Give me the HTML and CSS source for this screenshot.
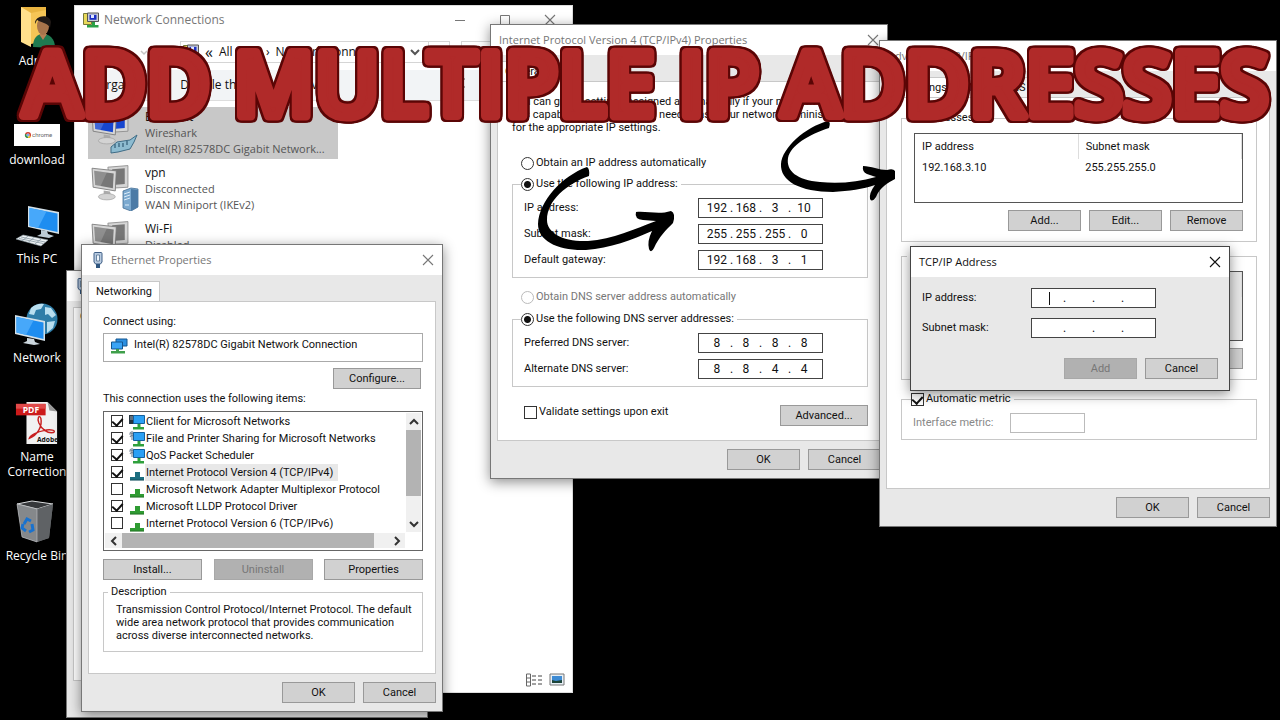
FILE: index.html
```
<!DOCTYPE html>
<html lang="en">
<head>
    <meta charset="utf-8">
    <title>Add Multiple IP Addresses</title>
    <link rel="stylesheet" href="styles.css">
</head>
<body>
    <!-- Shared icons -->
    <svg class="sprite" width="0" height="0" aria-hidden="true">
        <symbol id="i-close" viewBox="0 0 12 12"><path d="M1 1l10 10M11 1L1 11" fill="none" stroke="currentColor" stroke-width="1.1"/></symbol>
        <symbol id="i-net" viewBox="0 0 16 16">
            <path d="M.5 1.500h8v11h-8z" fill="#e8d95a" stroke="#777a3a"/>
            <path d="M4.500 1h11v8.500h-11z" fill="#c9ccd6" stroke="#555"/>
            <path d="M6.500 2.800h7v5h-7z" fill="#1b2fc4"/><path d="M8 3h3v3H8z" fill="#dfe6ff"/>
            <path d="M9 10h3v3h3.500v2.500H4V13h5z" fill="#2ba046"/>
        </symbol>
        <symbol id="i-plug" viewBox="0 0 10 16">
            <path d="M1 1.500Q1 .5 2 .5h6q1 0 1 1V10L7.500 12h-5L1 10z" fill="#b9cbe0" stroke="#3f5f86"/>
            <path d="M3.500 3h3v6h-3z" fill="#eef5fc" stroke="#52708f" stroke-width=".8"/>
            <path d="M3 12h4v4H3z" fill="#2f567f"/>
        </symbol>
        <symbol id="i-adapter" viewBox="0 0 18 16">
            <path d="M6 1h11v7H6z" fill="#2c8fe0" stroke="#14568f"/>
            <path d="M1.500 4h11v7h-11z" fill="#3aa4f5" stroke="#14568f"/>
            <path d="M6 11h3v2h6v2.500H1V13h5z" fill="#3f9f4a"/>
        </symbol>
        <symbol id="i-client" viewBox="0 0 16 16">
            <path d="M0 1h5v9H0z" fill="#26333d"/><path d="M1 3h3M1 5h3" stroke="#9ab"/>
            <path d="M4.500 1.500h11v8h-11z" fill="#2ba0f4" stroke="#14609e"/>
            <path d="M8.500 10h3v3H15v2.500H4V13h4.500z" fill="#2fa03c"/>
        </symbol>
        <symbol id="i-service" viewBox="0 0 16 16">
            <path d="M3 0v9M0 3h6M1 1l4 5M5 1L1 6" stroke="#7c8a99" stroke-width="1.200"/>
            <path d="M4.500 1.500h11v8h-11z" fill="#2ba0f4" stroke="#14609e"/>
            <path d="M8.500 10h3v3H15v2.500H4V13h4.500z" fill="#2fa03c"/>
        </symbol>
        <symbol id="i-proto" viewBox="0 0 16 16"><path d="M6 7h5v5h4v3.500H1V12h5z" fill="currentColor"/><path d="M1 15h14" stroke="#0004"/></symbol>
        <symbol id="i-screens" viewBox="0 0 36 34">
            <path d="M16 2l19-1.500V21l-17 1z" fill="var(--frame)" stroke="#8a8a8a" stroke-width=".8"/>
            <path d="M20 4l12-1v15l-11 1z" fill="var(--screen)"/>
            <path d="M1 3l23 2.500-1 19L2 21z" fill="var(--frame)" stroke="#777" stroke-width=".8"/>
            <path d="M3 5.500L21.500 8l-.8 14L4 19z" fill="var(--screen)"/>
            <path d="M3 5.500L15 7 9 20l-5-1z" fill="#fff" opacity=".18"/>
            <path d="M12 24l6 1 1 4h-7z" fill="#aaa"/>
            <ellipse cx="15" cy="30" rx="8" ry="3" fill="#d3d3d3" stroke="#999" stroke-width=".6"/>
        </symbol>
    </svg>

    <main class="desktop">
        <nav class="shortcuts">
            <a href="#" class="shortcut">
                <svg viewBox="0 0 40 44">
                    <path d="M4 2h25v34H4z" fill="#e9b440"/><path d="M4 2l10 6v34L4 37z" fill="#ffe08c"/><path d="M14 8L29 5v31l-15 3z" fill="#f6c556"/>
                    <path d="M16 42c0-9 4-13 10-13s12 4 12 14z" fill="#1f7a50"/><path d="M22 29l4 6 4-6z" fill="#b78054"/>
                    <ellipse cx="26" cy="21" rx="6" ry="9" fill="#a8744b"/><path d="M18 19c-1-9 15-11 16-2l-1 6c-2-5-8-5-13-8z" fill="#211a17"/>
                </svg>
                <span>Admin</span>
            </a>
            <a href="#" class="shortcut">
                <svg viewBox="0 0 46 44">
                    <path d="M0 20h46v22H0z" fill="#fff"/>
                    <circle cx="14" cy="31" r="3" fill="#d43b2d"/><path d="M14 31l3 1.500A3 3 0 0 1 14 34z" fill="#efbf2f"/><path d="M14 31l-3-1a3 3 0 0 0 3 4z" fill="#2b9950"/><circle cx="14" cy="31" r="1.300" fill="#4a84e8" stroke="#fff" stroke-width=".5"/>
                    <text x="18" y="33" font-size="6" font-family="Roboto, sans-serif" fill="#666">chrome</text>
                </svg>
                <span>download</span>
            </a>
            <a href="#" class="shortcut">
                <svg viewBox="0 0 46 44">
                    <path d="M14 3l31 6v22l-31-7z" fill="#d3e0e8"/><path d="M15.500 5L43.500 10.500v18.500l-28-6z" fill="#1e8df0"/><path d="M15.500 5l17 3.500L24 25l-8.500-2z" fill="#47a8fa"/>
                    <path d="M27 27l6 1 1 3 6 2-5 2-12-2 4-2z" fill="#bccbd4"/>
                    <path d="M9 32l25 5-7 6L2 36z" fill="#eef2f4" stroke="#93a2ab" stroke-width=".6"/><path d="M7 34l24 5M5 35.500l24 5M14 33l-6 5M20 34.500l-6 5M27 36l-6 5" stroke="#8797a1" stroke-width=".8"/>
                </svg>
                <span>This PC</span>
            </a>
            <a href="#" class="shortcut">
                <svg viewBox="0 0 46 44">
                    <circle cx="28" cy="17" r="15.500" fill="#2e7da8"/>
                    <path d="M17 6q6-5 13-4l-3 5-5 1-2 5-5-1zM31 5l6 1 5 7-4 3-4-4-3 1zM33 20l8-1-2 7-6 5z" fill="#b9dff0"/>
                    <path d="M1 13l30 6v20L1 32z" fill="#d3e0e8"/><path d="M2.500 15L29.500 20.500V37l-27-6.500z" fill="#1e8df0"/><path d="M2.500 15l17 3.500L12 33l-9.500-2.500z" fill="#47a8fa"/>
                    <path d="M13 36l7 1 1 3 5 2-6 1-11-2 4-2z" fill="#cbd6dd"/>
                </svg>
                <span>Network</span>
            </a>
            <a href="#" class="shortcut">
                <svg viewBox="0 0 46 46">
                    <path d="M12 1h22l10 10v34H12z" fill="#f1f1f1"/><path d="M34 1l10 10-8-1z" fill="#999"/>
                    <path d="M15 39c8-3 14-12 12-21-2-4-4 0-2 5 3 7 9 11 15 10 4-2-3-4-10-2-6 1-14 5-15 8z" fill="none" stroke="#c81f1f" stroke-width="1.500"/>
                    <path d="M1 3h31v12H1z" fill="#cc1a1a"/><path d="M1 3h31v5H1z" fill="#e14a4a"/>
                    <text x="8" y="13" font-size="9" font-weight="700" font-family="Open Sans, sans-serif" fill="#fff">PDF</text>
                    <text x="23" y="43" font-size="7" font-weight="700" font-family="Open Sans, sans-serif" fill="#111">Adobe</text>
                </svg>
                <span>Name Correction</span>
            </a>
            <a href="#" class="shortcut">
                <svg viewBox="0 0 46 44">
                    <path d="M3 4l15-3 21 3-4 34-12 4-15-5z" fill="#75787b"/><path d="M3 4l15-3 21 3-16 5z" fill="#35373a" stroke="#d5d7d9"/>
                    <path d="M23 9l16-5-4 34-12 4z" fill="#5f6265"/><path d="M3 4l20 5v33L8 37z" fill="#85888b" stroke="#c3c5c7" stroke-width=".6"/>
                    <path d="M10 24l3-5 4 2M18 24l1 6-4 2M12 31l-4-3 1-4" fill="none" stroke="#1972cf" stroke-width="3"/>
                </svg>
                <span>Recycle Bin</span>
            </a>
        </nav>

        <!-- Explorer window -->
        <section class="window explorer inactive">
            <header class="titlebar">
                <svg class="icon-16"><use href="#i-net"/></svg>
                <h2>Network Connections</h2>
                <div class="window-buttons">
                    <button aria-label="Minimize"><svg viewBox="0 0 12 12"><path d="M1 6.500h10" stroke="currentColor"/></svg></button>
                    <button aria-label="Maximize"><svg viewBox="0 0 12 12"><path d="M1.500 1.500h9v9h-9z" fill="none" stroke="currentColor"/></svg></button>
                    <button aria-label="Close"><svg><use href="#i-close"/></svg></button>
                </div>
            </header>
            <div class="nav-row">
                <button aria-label="Back"><svg viewBox="0 0 14 12"><path d="M13 6H2M6 2L2 6l4 4" fill="none" stroke="#c4c4c4" stroke-width="1.500"/></svg></button>
                <button aria-label="Forward"><svg viewBox="0 0 14 12"><path d="M1 6h11M8 2l4 4-4 4" fill="none" stroke="#c4c4c4" stroke-width="1.500"/></svg></button>
                <button aria-label="Recent"><svg viewBox="0 0 14 12"><path d="M4 5l3 3 3-3" fill="none" stroke="#c4c4c4" stroke-width="1.500"/></svg></button>
                <button aria-label="Up"><svg viewBox="0 0 14 12"><path d="M7 12V2M2 7l5-5 5 5" fill="none" stroke="#555" stroke-width="2"/></svg></button>
                <div class="address">
                    <svg class="icon-16"><use href="#i-net"/></svg>
                    <span class="chevrons">«</span><span>All Co...</span><span>›</span><span class="crumb">Network Connec...</span>
                    <button aria-label="Previous locations"><svg viewBox="0 0 14 12"><path d="M3 4l4 4 4-4" fill="none" stroke="#555" stroke-width="2"/></svg></button>
                    <button class="refresh" aria-label="Refresh"><svg viewBox="0 0 14 12"><path d="M4 2a4.500 4.500 0 1 0 6 0M10 6V2h4M3 2h3" fill="none" stroke="#555" stroke-width="1.500"/></svg></button>
                </div>
                <input class="search" type="search" placeholder="Search Network Connections" aria-label="Search Network Connections">
            </div>
            <div class="toolbar">
                <button>Organize ▾</button>
                <button>Disable this network device</button>
                <button class="view" aria-label="Change your view">
                    <svg viewBox="0 0 16 16"><path d="M.5.5h8v6h-8zM.5 8.500h8v6h-8z" fill="#dceafa" stroke="#777"/><path d="M2 2h5v3H2z" fill="#4a86d8"/><path d="M2 11h5v2H2z" fill="#6ba43a"/><path d="M10 2h5M10 5h3M10 10h5M10 13h3" stroke="#555"/></svg>
                </button>
            </div>
            <ul class="connections">
                <li class="selected">
                    <svg class="screens on" viewBox="0 0 48 46">
                        <use href="#i-screens" width="38" height="36"/>
                        <path d="M20 38l6-5 13-2 7-5-3 7-4 7-12 3-7 1z" fill="#8dbbd0" stroke="#3f6c86"/><path d="M24 39v-4M28 38v-4M32 38v-4M36 36v-4" stroke="#315a75" stroke-width="1.200"/>
                    </svg>
                    <p><b>Ethernet</b><br>Wireshark<br>Intel(R) 82578DC Gigabit Network...</p>
                </li>
                <li>
                    <svg class="screens" viewBox="0 0 48 46">
                        <use href="#i-screens" width="38" height="36"/>
                        <path d="M32 26l8-3 7 1v18l-7 4-8-3z" fill="#7ba9cf" stroke="#456f94" stroke-width=".8"/><path d="M40 24l7 1v17l-7 4z" fill="#4c7ba6"/><path d="M33 29l6-2M33 32l6-2M33 35l6-2M34 40h4" stroke="#dcecf9"/>
                    </svg>
                    <p><b>vpn</b><br>Disconnected<br>WAN Miniport (IKEv2)</p>
                </li>
                <li>
                    <svg class="screens" viewBox="0 0 48 46"><use href="#i-screens" width="38" height="36"/></svg>
                    <p><b>Wi-Fi</b><br>Disabled</p>
                </li>
            </ul>
            <footer class="statusbar">
                <button aria-label="Details"><svg viewBox="0 0 16 14"><path d="M.5 1h4v12h-4zM.5 5h4M.5 9h4" fill="none" stroke="#666"/><path d="M6 3h4M12 3h4M6 7h4M12 7h4M6 11h4M12 11h4" stroke="#444"/></svg></button>
                <button aria-label="Large icons"><svg viewBox="0 0 16 14"><path d="M1 1h14v11H1z" fill="#e8f0f7" stroke="#777"/><path d="M3 3h10v7H3z" fill="#3d8bd4"/><path d="M3 7l4 1 6-1v3H3z" fill="#1c4438"/></svg></button>
            </footer>
        </section>

        <section class="window status inactive">
            <header class="titlebar"><svg class="icon-plug"><use href="#i-plug"/></svg></header>
            <div class="dialog-body"><div class="panel">General</div></div>
        </section>

        <!-- Ethernet Properties -->
        <section class="window ethernet inactive">
            <header class="titlebar">
                <svg class="icon-plug"><use href="#i-plug"/></svg>
                <h2>Ethernet Properties</h2>
                <div class="window-buttons"><button aria-label="Close"><svg><use href="#i-close"/></svg></button></div>
            </header>
            <div class="dialog-body">
                <div class="tabs"><button class="tab">Networking</button></div>
                <div class="panel">
                    <p>Connect using:</p>
                    <div class="adapter"><svg><use href="#i-adapter"/></svg>Intel(R) 82578DC Gigabit Network Connection</div>
                    <div class="button-row configure"><button class="btn wide">Configure...</button></div>
                    <p class="items-label">This connection uses the following items:</p>
                    <div class="listbox">
                        <div class="items">
                            <label><input type="checkbox" checked><svg><use href="#i-client"/></svg><span>Client for Microsoft Networks</span></label>
                            <label><input type="checkbox" checked><svg><use href="#i-service"/></svg><span>File and Printer Sharing for Microsoft Networks</span></label>
                            <label><input type="checkbox" checked><svg><use href="#i-service"/></svg><span>QoS Packet Scheduler</span></label>
                            <label class="current"><input type="checkbox" checked><svg><use href="#i-proto"/></svg><span>Internet Protocol Version 4 (TCP/IPv4)</span></label>
                            <label><input type="checkbox"><svg><use href="#i-proto"/></svg><span>Microsoft Network Adapter Multiplexor Protocol</span></label>
                            <label><input type="checkbox" checked><svg><use href="#i-proto"/></svg><span>Microsoft LLDP Protocol Driver</span></label>
                            <label><input type="checkbox"><svg><use href="#i-proto"/></svg><span>Internet Protocol Version 6 (TCP/IPv6)</span></label>
                        </div>
                        <div class="scroll vertical">
                            <button aria-label="Scroll up"><svg viewBox="0 0 10 10"><path d="M1 7l4-4 4 4" /></svg></button>
                            <div class="thumb"></div>
                            <button aria-label="Scroll down"><svg viewBox="0 0 10 10"><path d="M1 3l4 4 4-4" /></svg></button>
                        </div>
                        <div class="scroll horizontal">
                            <button aria-label="Scroll left"><svg viewBox="0 0 10 10"><path d="M7 1L3 5l4 4" /></svg></button>
                            <div class="thumb"></div>
                            <button aria-label="Scroll right"><svg viewBox="0 0 10 10"><path d="M3 1l4 4-4 4" /></svg></button>
                        </div>
                    </div>
                    <div class="item-actions">
                        <button class="btn">Install...</button>
                        <button class="btn" disabled>Uninstall</button>
                        <button class="btn">Properties</button>
                    </div>
                    <fieldset class="description">
                        <legend>Description</legend>
                        <p>Transmission Control Protocol/Internet Protocol. The default<br>wide area network protocol that provides communication<br>across diverse interconnected networks.</p>
                    </fieldset>
                </div>
                <footer class="dialog-footer"><button class="btn">OK</button><button class="btn">Cancel</button></footer>
            </div>
        </section>

        <!-- IPv4 Properties -->
        <section class="window ipv4 inactive">
            <header class="titlebar">
                <h2>Internet Protocol Version 4 (TCP/IPv4) Properties</h2>
                <div class="window-buttons"><button aria-label="Close"><svg><use href="#i-close"/></svg></button></div>
            </header>
            <div class="dialog-body">
                <div class="tabs"><button class="tab">General</button></div>
                <div class="panel">
                    <p>You can get IP settings assigned automatically if your network supports<br>this capability. Otherwise, you need to ask your network administrator<br>for the appropriate IP settings.</p>
                    <label class="option first"><input type="radio" name="ip">Obtain an IP address automatically</label>
                    <fieldset class="ip-group">
                        <legend><label class="option"><input type="radio" name="ip" checked>Use the following IP address:</label></legend>
                        <div class="ip-row"><label for="ip1">IP address:</label><div class="ip-field"><input id="ip1" value="192">.<input value="168" aria-label="IP octet 2">.<input value="3" aria-label="IP octet 3">.<input value="10" aria-label="IP octet 4"></div></div>
                        <div class="ip-row"><label for="mask1">Subnet mask:</label><div class="ip-field"><input id="mask1" value="255">.<input value="255" aria-label="Mask octet 2">.<input value="255" aria-label="Mask octet 3">.<input value="0" aria-label="Mask octet 4"></div></div>
                        <div class="ip-row"><label for="gw1">Default gateway:</label><div class="ip-field"><input id="gw1" value="192">.<input value="168" aria-label="Gateway octet 2">.<input value="3" aria-label="Gateway octet 3">.<input value="1" aria-label="Gateway octet 4"></div></div>
                    </fieldset>
                    <label class="option second disabled"><input type="radio" name="dns" disabled>Obtain DNS server address automatically</label>
                    <fieldset class="ip-group">
                        <legend><label class="option"><input type="radio" name="dns" checked>Use the following DNS server addresses:</label></legend>
                        <div class="ip-row"><label for="dns1">Preferred DNS server:</label><div class="ip-field"><input id="dns1" value="8">.<input value="8" aria-label="Preferred octet 2">.<input value="8" aria-label="Preferred octet 3">.<input value="8" aria-label="Preferred octet 4"></div></div>
                        <div class="ip-row"><label for="dns2">Alternate DNS server:</label><div class="ip-field"><input id="dns2" value="8">.<input value="8" aria-label="Alternate octet 2">.<input value="4" aria-label="Alternate octet 3">.<input value="4" aria-label="Alternate octet 4"></div></div>
                    </fieldset>
                    <div class="validate-row">
                        <label class="option"><input type="checkbox">Validate settings upon exit</label>
                        <button class="btn wide">Advanced...</button>
                    </div>
                </div>
                <footer class="dialog-footer"><button class="btn">OK</button><button class="btn">Cancel</button></footer>
            </div>
        </section>

        <!-- Advanced TCP/IP Settings -->
        <section class="window advanced inactive">
            <header class="titlebar">
                <h2>Advanced TCP/IP Settings</h2>
                <div class="window-buttons"><button aria-label="Close"><svg><use href="#i-close"/></svg></button></div>
            </header>
            <div class="dialog-body">
                <div class="tabs"><button class="tab">IP Settings</button><button class="tab back">DNS</button><button class="tab back">WINS</button></div>
                <div class="panel">
                    <fieldset class="list-group">
                        <legend>IP addresses</legend>
                        <div class="table-box">
                            <table>
                                <thead><tr><th>IP address</th><th>Subnet mask</th></tr></thead>
                                <tbody><tr><td>192.168.3.10</td><td>255.255.255.0</td></tr></tbody>
                            </table>
                        </div>
                        <div class="button-row"><button class="btn">Add...</button><button class="btn">Edit...</button><button class="btn">Remove</button></div>
                    </fieldset>
                    <fieldset class="list-group gateways">
                        <legend>Default gateways:</legend>
                        <div class="table-box">
                            <table><thead><tr><th>Gateway</th><th>Metric</th></tr></thead></table>
                        </div>
                        <div class="button-row"><button class="btn">Add...</button><button class="btn">Edit...</button><button class="btn">Remove</button></div>
                    </fieldset>
                    <fieldset class="metric">
                        <legend><label class="option"><input type="checkbox" checked>Automatic metric</label></legend>
                        <div class="metric-row"><label for="metric">Interface metric:</label><input id="metric" type="text" disabled></div>
                    </fieldset>
                </div>
                <footer class="dialog-footer"><button class="btn">OK</button><button class="btn">Cancel</button></footer>
            </div>
        </section>

        <!-- TCP/IP Address -->
        <section class="window address-dialog">
            <header class="titlebar">
                <h2>TCP/IP Address</h2>
                <div class="window-buttons"><button aria-label="Close"><svg><use href="#i-close"/></svg></button></div>
            </header>
            <div class="address-form">
                <div class="ip-row"><label for="new-ip">IP address:</label><div class="ip-field"><span class="caret"></span><input id="new-ip">.<input aria-label="New IP octet 2">.<input aria-label="New IP octet 3">.<input aria-label="New IP octet 4"></div></div>
                <div class="ip-row"><label for="new-mask">Subnet mask:</label><div class="ip-field"><input id="new-mask">.<input aria-label="New mask octet 2">.<input aria-label="New mask octet 3">.<input aria-label="New mask octet 4"></div></div>
                <div class="button-row"><button class="btn" disabled>Add</button><button class="btn">Cancel</button></div>
            </div>
        </section>

        <!-- Hand drawn arrows and headline -->
        <svg class="overlay" viewBox="0 0 1280 720">
            <path d="M587 167C562 176 539 201 538 224C538 241 558 251 586 250C610 248 632 240 652 231Q647 241 649 249Q651 254 654 248C659 237 666 230 673 223Q676 213 671 211C659 215 648 211 636 212Q634 219 643 220L656 221C635 229 613 239 588 241C563 242 547 233 547 220C547 200 567 184 589 176Q590 169 587 167Z"/>
            <path d="M828 121C805 127 782 148 781 164C780 181 800 192 833 192C849 191 863 189 875 185Q869 193 870 199Q872 203 876 197C880 187 888 183 895 179V171Q893 168 887 170C879 170 871 166 863 166Q862 172 867 174L876 177C858 182 839 184 820 182C797 180 786 171 788 158C791 145 808 135 829 128Q831 122 828 121Z"/>
            <text x="646" y="116" text-anchor="middle">ADD MULTIPLE IP ADDRESSES</text>
        </svg>
    </main>
</body>
</html>
```
FILE: styles.css
```
:root {
    --face: #e8e8e8;
    --line: #c8c8c8;
    --text: #111;
    --muted: #777;
    --ui: "Open Sans", "Noto Sans", sans-serif;
    --dialog: Roboto, "Liberation Sans", sans-serif;
}

* {
    box-sizing: border-box;
}

body {
    margin: 0;
    background: #000;
    color: var(--text);
    font: 11px/14px var(--dialog);
}

p,
h2,
ul,
fieldset {
    margin: 0;
    padding: 0;
}

button,
input {
    font: inherit;
    color: inherit;
}

.sprite {
    position: absolute;
}

.desktop {
    position: relative;
    min-height: 100vh;
    overflow: hidden;
}

/* Desktop shortcuts */
.shortcuts {
    display: flex;
    flex-direction: column;
    width: 74px;
    padding-top: 5px;
}

.shortcut {
    display: flex;
    flex-direction: column;
    align-items: center;
    gap: 4px;
    height: 99px;
    color: #fff;
    font: 12px/15px var(--ui);
    text-align: center;
    text-decoration: none;
}

.shortcut svg {
    width: 46px;
    height: 44px;
}

.shortcut span {
    white-space: nowrap;
}

.shortcut:nth-child(5) span {
    white-space: normal;
}

/* Windows */
.window {
    position: absolute;
    display: flex;
    flex-direction: column;
    background: #fff;
    border: 1px solid #777;
    box-shadow: 0 3px 12px rgba(0, 0, 0, 0.45);
}

.titlebar {
    display: flex;
    align-items: center;
    flex: none;
    height: 30px;
    padding: 0 8px;
    background: #fff;
}

.titlebar h2 {
    font: 11px/16px var(--ui);
}

.inactive > .titlebar {
    color: var(--muted);
}

.window-buttons {
    display: flex;
    gap: 33px;
    margin-left: auto;
}

.window-buttons button,
.nav-row button,
.toolbar button,
.statusbar button {
    display: flex;
    padding: 0;
    border: 0;
    background: none;
}

.window-buttons svg {
    width: 12px;
    height: 12px;
}

.icon-16 {
    flex: none;
    width: 16px;
    height: 16px;
}

.icon-plug {
    width: 10px;
    height: 16px;
}

/* Explorer */
.explorer {
    left: 74px;
    top: 5px;
    width: 499px;
    height: 688px;
    border-color: #ddd;
    font: 12px/16px var(--ui);
}

.explorer h2 {
    margin-left: 5px;
    font-size: 12px;
}

.explorer .titlebar {
    height: 28px;
    padding-right: 16px;
}

.nav-row {
    display: flex;
    align-items: center;
    gap: 11px;
    height: 36px;
    padding-left: 12px;
}

.nav-row > button svg,
.address button svg {
    width: 14px;
    height: 12px;
}

.address {
    display: flex;
    align-items: center;
    gap: 6px;
    flex: none;
    width: 270px;
    height: 22px;
    margin-left: -7px;
    padding-left: 2px;
    border: 1px solid #d5d5d5;
}

.chevrons {
    font-size: 16px;
}

.crumb {
    flex: 1;
}

.address .refresh {
    align-items: center;
    height: 20px;
    padding: 0 3px;
    border-left: 1px solid #d5d5d5;
}

.search {
    flex: 1;
    min-width: 0;
    height: 22px;
    padding: 0 8px;
    border: 1px solid #d5d5d5;
}

.toolbar {
    display: flex;
    align-items: center;
    gap: 24px;
    height: 31px;
    padding: 0 22px;
    background: #f2f4f6;
    border-bottom: 1px solid #ddd;
}

.toolbar .view {
    margin-left: auto;
    margin-right: 84px;
}

.view svg {
    width: 16px;
    height: 16px;
}

.connections {
    flex: 1;
    padding: 6px 13px;
    list-style: none;
}

.connections li {
    display: flex;
    gap: 6px;
    width: 250px;
    height: 52px;
    margin-bottom: 4px;
    padding: 2px 3px;
    color: #555;
    font: 11px/16px var(--ui);
    white-space: nowrap;
}

.connections .selected {
    background: #c8c8c8;
}

.connections b {
    color: var(--text);
    font-size: 12px;
    font-weight: 400;
}

.screens {
    --frame: #d6d6d6;
    --screen: #777;
    flex: none;
    width: 48px;
    height: 46px;
}

.screens.on {
    --screen: #1746cf;
}

.statusbar {
    display: flex;
    justify-content: flex-end;
    gap: 7px;
    padding: 5px 7px;
}

.statusbar svg {
    width: 16px;
    height: 14px;
}

/* Dialogs */
.dialog-body {
    display: flex;
    flex-direction: column;
    flex: 1;
    padding: 6px 6px 8px;
    background: var(--face);
}

.tabs {
    display: flex;
    height: 20px;
}

.tab {
    padding: 0 7px;
    background: #fff;
    border: 1px solid var(--line);
    border-bottom: 0;
}

.tab.back {
    background: #f0f0f0;
    border-left: 0;
}

.panel {
    flex: 1;
    padding: 13px 12px 12px 14px;
    background: #fff;
    border: 1px solid var(--line);
}

.dialog-footer,
.button-row {
    display: flex;
    justify-content: flex-end;
    gap: 8px;
}

.dialog-footer {
    padding-top: 8px;
}

.btn {
    width: 73px;
    height: 21px;
    padding: 0;
    background: #d1d1d1;
    border: 1px solid #999;
}

.btn.wide {
    width: 88px;
}

.btn:disabled {
    background: #b1b1b1;
    border-color: #a8a8a8;
    color: #777;
}

fieldset {
    min-width: 0;
    border: 1px solid var(--line);
}

legend {
    padding: 0 3px;
}

.option {
    display: flex;
    align-items: center;
    gap: 2px;
    height: 14px;
}

.option.disabled {
    color: var(--muted);
}

input[type="radio"],
input[type="checkbox"] {
    appearance: none;
    flex: none;
    width: 13px;
    height: 13px;
    margin: 0;
    background: #fff;
    border: 1px solid #333;
}

input[type="radio"] {
    border-radius: 50%;
}

input[type="radio"]:checked {
    background: radial-gradient(circle, #111 3px, #fff 4px);
}

input[type="radio"]:disabled {
    border-color: #bbb;
}

input[type="checkbox"]:checked::after {
    content: "";
    display: block;
    width: 5px;
    height: 8px;
    margin: 0 auto;
    border: solid #111;
    border-width: 0 2px 2px 0;
    transform: rotate(42deg);
}

.status {
    left: 66px;
    top: 270px;
    width: 362px;
    height: 448px;
}

.status .titlebar {
    padding-left: 10px;
}

.status .panel {
    flex: none;
    height: 374px;
    padding: 2px 6px;
}

/* Ethernet Properties */
.ethernet {
    left: 81px;
    top: 244px;
    width: 362px;
    height: 468px;
}

.ethernet .titlebar {
    padding-left: 11px;
}

.ethernet h2 {
    margin-left: 8px;
}

.adapter {
    display: flex;
    gap: 6px;
    height: 29px;
    margin: 4px 0 6px;
    padding: 4px 6px;
    border: 1px solid #aaa;
}

.adapter svg {
    width: 18px;
    height: 16px;
}

.configure {
    padding-right: 2px;
}

.items-label {
    margin: 3px 0 5px;
}

.listbox {
    display: grid;
    grid-template-columns: 1fr 15px;
    grid-template-rows: 119px 15px;
    gap: 1px;
    height: 140px;
    padding: 1px;
    border: 1px solid #666;
}

.items {
    overflow: hidden;
    padding-left: 6px;
}

.items label {
    display: flex;
    align-items: center;
    height: 17px;
    white-space: nowrap;
}

.items svg {
    width: 16px;
    height: 16px;
    margin-left: 6px;
    color: #2f9b32;
}

.items .current svg {
    color: #1c6e80;
}

.items span {
    padding: 0 5px 0 1px;
    line-height: 17px;
}

.items .current span {
    background: var(--face);
}

.items input[type="checkbox"] {
    width: 12px;
    height: 12px;
    margin-bottom: 2px;
}

.scroll {
    display: flex;
    background: #f0f0f0;
}

.scroll button {
    display: grid;
    place-items: center;
    flex: none;
    width: 17px;
    height: 15px;
    padding: 0;
    background: none;
    border: 0;
}

.scroll svg {
    width: 10px;
    height: 10px;
    fill: none;
    stroke: #333;
    stroke-width: 2;
}

.vertical {
    flex-direction: column;
    justify-content: space-between;
}

.vertical button {
    width: 15px;
    height: 17px;
}

.vertical .thumb {
    flex: 0 0 66px;
    margin-bottom: auto;
}

.horizontal .thumb {
    flex: 0 0 84%;
    margin-right: auto;
}

.thumb {
    background: #b3b3b3;
}

.item-actions {
    display: flex;
    justify-content: space-between;
    margin: 8px 0 5px;
}

.item-actions .btn {
    width: 99px;
}

.description {
    padding: 4px 4px 9px 12px;
}

.description legend {
    margin-left: -8px;
}

.description p,
.ipv4 .panel p {
    line-height: 13px;
    white-space: nowrap;
}

/* IPv4 Properties */
.ipv4 {
    left: 490px;
    top: 24px;
    width: 398px;
    height: 455px;
}

.option.first {
    margin: 22px 0 7px 9px;
}

.option.second {
    margin: 12px 0 8px 9px;
}

.ip-group {
    padding: 7px 8px;
}

.ip-group legend {
    padding: 0 3px 0 0;
}

.ip-row {
    display: grid;
    grid-template-columns: 174px 125px;
    align-items: center;
    margin-left: 3px;
}

.ip-row + .ip-row {
    margin-top: 6px;
}

.ip-field {
    position: relative;
    display: flex;
    align-items: center;
    height: 20px;
    padding: 0 5px;
    background: #fff;
    border: 1px solid #444;
    font-size: 12px;
}

.ip-field input {
    flex: 1;
    min-width: 0;
    width: 0;
    padding: 0;
    background: none;
    border: 0;
    font-size: 12px;
    text-align: center;
}

.validate-row {
    display: flex;
    justify-content: space-between;
    margin: 18px 0 0 12px;
}

/* Advanced settings */
.advanced {
    left: 879px;
    top: 40px;
    width: 398px;
    height: 487px;
}

.list-group {
    padding: 8px 13px 10px 12px;
}

.list-group legend {
    margin-left: -7px;
}

.gateways {
    margin: 7px 0 12px;
}

.table-box {
    height: 70px;
    margin-bottom: 7px;
    border: 1px solid #555;
}

.gateways .table-box {
    background: var(--face);
}

table {
    width: 100%;
    border-collapse: collapse;
    table-layout: fixed;
}

th,
td {
    padding: 0 7px;
    text-align: left;
    font-weight: 400;
}

th {
    height: 25px;
    border-right: 1px solid #ddd;
}

td {
    height: 18px;
}

.metric {
    padding: 7px 11px 6px;
}

.metric legend {
    margin-left: -2px;
    padding-left: 0;
}

.metric-row {
    display: grid;
    grid-template-columns: 97px 75px;
    align-items: center;
    color: #888;
}

.metric-row input {
    height: 20px;
    background: #fff;
    border: 1px solid #bbb;
}

/* TCP/IP Address */
.address-dialog {
    left: 910px;
    top: 246px;
    width: 320px;
    border-color: #444;
}

.address-form {
    padding: 11px;
    background: var(--face);
}

.address-form .ip-row {
    grid-template-columns: 109px 125px;
    margin-left: 0;
}

.address-form .ip-row + .ip-row {
    margin-top: 10px;
}

.address-form .button-row {
    margin-top: 20px;
}

.caret {
    position: absolute;
    left: 17px;
    top: 3px;
    width: 1px;
    height: 13px;
    background: #111;
}

.overlay {
    position: absolute;
    inset: 0;
    width: 100%;
    pointer-events: none;
}

.overlay text {
    fill: #b02a29;
    stroke: #b02a29;
    stroke-width: 9px;
    stroke-linejoin: round;
    font: 600 88px "Open Sans", sans-serif;
    filter: drop-shadow(2px 0 0 #5a0505) drop-shadow(-2px 0 0 #5a0505) drop-shadow(0 2px 0 #5a0505) drop-shadow(0 -2px 0 #5a0505);
}
```
